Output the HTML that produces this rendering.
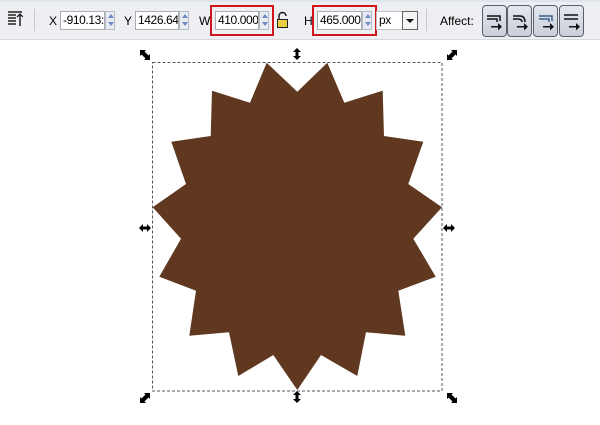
<!DOCTYPE html>
<html><head><style>
body{margin:0;width:600px;height:425px;background:#fff;position:relative;overflow:hidden;font-family:"Liberation Sans",sans-serif;font-size:12px;color:#000}
.a{position:absolute}
.tb{left:0;top:0;width:600px;height:40px;background:#eeeff2;border-top:2px solid #dfe3ec;box-sizing:border-box;border-bottom:1px solid #d8d8dc}
.inp{background:#fff;border:1px solid #abadb3;height:19px;box-sizing:border-box;line-height:17px;padding-left:2px;font-size:12px;letter-spacing:-0.4px;overflow:hidden;white-space:nowrap}
.sp{width:10px;height:19px;background:#e8ebf2;border:1px solid #b8bcc8;box-sizing:border-box}
.sp:before{content:"";position:absolute;left:2px;top:2px;border:3px solid transparent;border-bottom:4px solid #6d8ac2;border-top:0}
.sp:after{content:"";position:absolute;left:2px;top:10px;border:3px solid transparent;border-top:4px solid #6d8ac2;border-bottom:0}
.red{border:2px solid #d0161c;box-sizing:border-box}
.btn{width:25px;height:32px;top:5px;border:1px solid #5a5f6a;border-radius:4px;background:linear-gradient(#e4e7ee,#c9ced8);box-sizing:border-box}
.sep{width:1px;height:22px;top:9px;background:#c7c9cf}
</style></head><body>
<div class="a tb"></div>
<svg class="a" style="left:8px;top:11px" width="15" height="16"><g stroke="#222" stroke-width="1.5"><line x1="0" y1="1" x2="14" y2="1"/><line x1="0" y1="4" x2="8" y2="4"/><line x1="0" y1="7" x2="8" y2="7"/><line x1="0" y1="10" x2="8" y2="10"/><line x1="0" y1="13" x2="8" y2="13"/><line x1="12" y1="4" x2="12" y2="15"/></g><path d="M9 6 L12 3 L15 6" fill="none" stroke="#222" stroke-width="1.3"/></svg>
<div class="a sep" style="left:34px"></div>
<div class="a" style="left:49px;top:14px">X</div>
<div class="a inp" style="left:60px;top:11px;width:45px">-910.13:</div>
<div class="a sp" style="left:105px;top:11px"></div>
<div class="a" style="left:124px;top:14px">Y</div>
<div class="a inp" style="left:135px;top:11px;width:44px">1426.64</div>
<div class="a sp" style="left:179px;top:11px"></div>
<div class="a" style="left:199px;top:14px">W</div>
<div class="a red" style="left:210px;top:5px;width:64px;height:31px"></div>
<div class="a inp" style="left:215px;top:11px;width:44px">410.000</div>
<div class="a sp" style="left:259px;top:11px"></div>
<svg class="a" style="left:276px;top:11px" width="13" height="18"><path d="M3 8 V5 a3.5 3.5 0 0 1 7 0" fill="none" stroke="#222" stroke-width="1.5"/><rect x="1.5" y="8.5" width="10" height="8" fill="#e8d040" stroke="#222"/></svg>
<div class="a" style="left:304px;top:14px">H</div>
<div class="a red" style="left:312px;top:5px;width:65px;height:31px"></div>
<div class="a inp" style="left:317px;top:11px;width:45px">465.000</div>
<div class="a sp" style="left:362px;top:11px"></div>
<div class="a inp" style="left:376px;top:11px;width:42px;border-color:#c0c2c8">px</div>
<div class="a" style="left:402px;top:11px;width:16px;height:19px;border:1px solid #666;box-sizing:border-box;background:#f4f4f4"></div>
<div class="a" style="left:406px;top:19px;border:4px solid transparent;border-top:4px solid #111;border-bottom:0"></div>
<div class="a sep" style="left:426px"></div>
<div class="a" style="left:440px;top:14px">Affect:</div>
<div class="a btn" style="left:482px"></div>
<div class="a btn" style="left:507px"></div>
<div class="a btn" style="left:533px"></div>
<div class="a btn" style="left:559px"></div>
<svg class="a" style="left:482px;top:5px" width="102" height="32"><g stroke="#111" stroke-width="1.5" fill="none">
<path d="M5 11 H18 V16 M5 14 H15 V17"/><path d="M31 11 H38 Q43 11 43 17 M31 14 H36 Q40 14 40 17"/><path d="M57 11 H70 V16 M57 14 H67 V17" stroke="#3a5f8a"/><path d="M82 10 H96 M82 14 H96"/></g>
<g fill="#111"><rect x="9" y="21" width="8" height="1.5"/><path d="M16 18 l4 3.7 -4 3.7z"/><rect x="35" y="21" width="8" height="1.5"/><path d="M42 18 l4 3.7 -4 3.7z"/><rect x="61" y="21" width="8" height="1.5"/><path d="M68 18 l4 3.7 -4 3.7z"/><rect x="87" y="21" width="8" height="1.5"/><path d="M94 18 l4 3.7 -4 3.7z"/></g></svg>
<svg class="a" style="left:0;top:0" width="600" height="425">
<rect x="152.5" y="62.5" width="289.5" height="328.5" fill="none" stroke="#555" stroke-dasharray="3,2"/>
<polygon fill="#603820" points="266.7,62.7 297.3,91.7 327.3,62.7 344.3,102.7 382.7,90.7 384,136 423.3,141.7 408.3,184 442,207.3 413.3,238.7 435.7,276.7 398.3,290.7 405.3,335.7 366,332.3 357.3,376 321,355 297.3,390 273.3,355 238.3,376 229,332.3 189.3,335.7 196,290.7 159.3,276.7 181,238.7 152.7,207.3 186,184 171.3,141.7 210.7,136 212,90.7 250,102.7"/>
<g fill="#000">
<path d="M140 50 h6 l-1.5 1.5 4 4 1.5 -1.5 v6 h-6 l1.5 -1.5 -4 -4 -1.5 1.5z"/>
<path d="M457 50 h-6 l1.5 1.5 -4 4 -1.5 -1.5 v6 h6 l-1.5 -1.5 4 -4 1.5 1.5z"/>
<path d="M140 403 h6 l-1.5 -1.5 4 -4 1.5 1.5 v-6 h-6 l1.5 1.5 -4 4 -1.5 -1.5z"/>
<path d="M457 403 h-6 l1.5 -1.5 -4 -4 -1.5 1.5 v-6 h6 l-1.5 1.5 4 4 1.5 -1.5z"/>
<path d="M297 48 l4 4 h-2.5 v4 h2.5 l-4 4 -4 -4 h2.5 v-4 h-2.5z"/>
<path d="M297 391 l4 4 h-2.5 v4 h2.5 l-4 4 -4 -4 h2.5 v-4 h-2.5z"/>
<path d="M139 228 l4 -4 v2.5 h4 v-2.5 l4 4 -4 4 v-2.5 h-4 v2.5z"/>
<path d="M443 228 l4 -4 v2.5 h4 v-2.5 l4 4 -4 4 v-2.5 h-4 v2.5z"/>
</g></svg>
</body></html>
